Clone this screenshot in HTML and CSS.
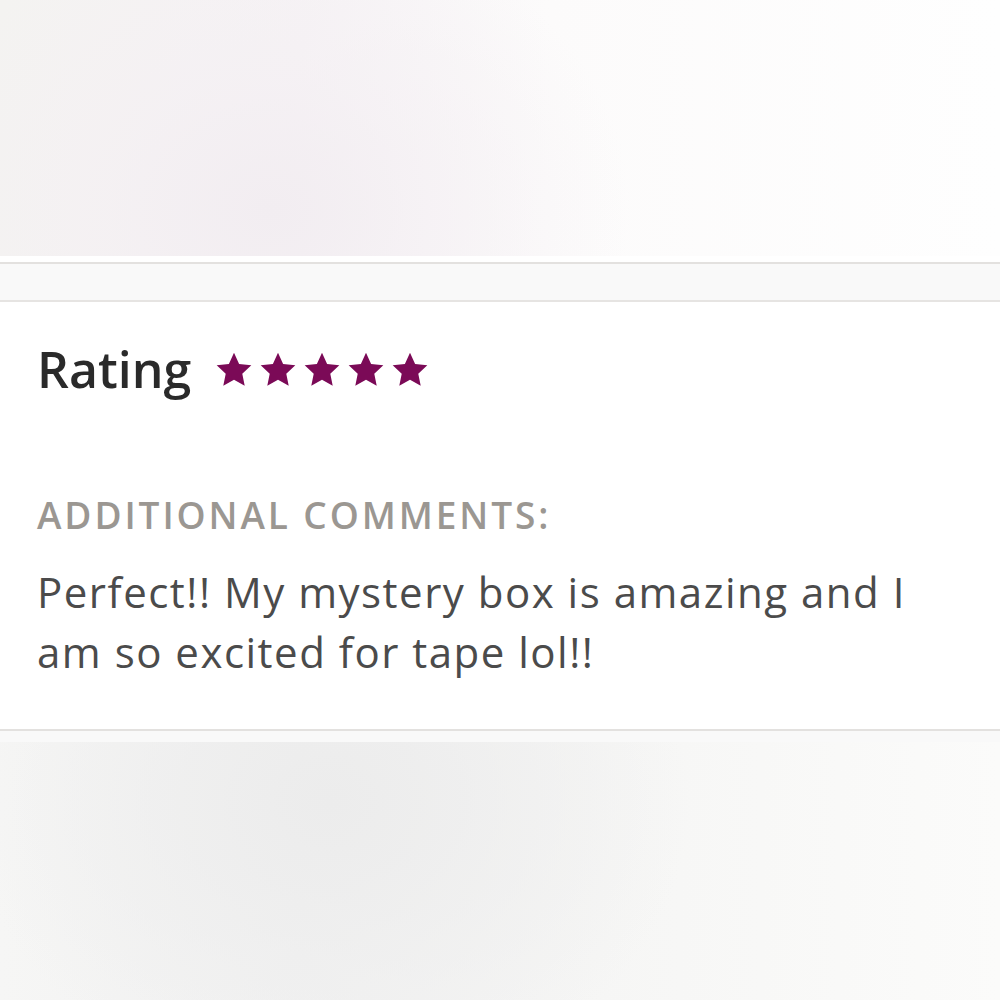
FILE: index.html
```html
<!DOCTYPE html>
<html lang="en">
<head>
  <meta charset="UTF-8">
  <meta name="viewport" content="width=device-width, initial-scale=1.0">
  <title>Review</title>
  <link rel="stylesheet" href="styles.css">
</head>
<body>
  <!-- blurred area above the review -->
  <div class="backdrop-top"></div>

  <div class="spacer-band"></div>

  <div class="review-card">
    <div class="rating-row">
      <h2>Rating</h2>
      <div class="stars">
        <svg viewBox="0 0 24 24"><path d="M12 1.1L15.23 8.15 22.94 9.05 17.23 14.3 18.76 21.9 12 18.1 5.24 21.9 6.77 14.3 1.06 9.05 8.77 8.15z"/></svg>
        <svg viewBox="0 0 24 24"><path d="M12 1.1L15.23 8.15 22.94 9.05 17.23 14.3 18.76 21.9 12 18.1 5.24 21.9 6.77 14.3 1.06 9.05 8.77 8.15z"/></svg>
        <svg viewBox="0 0 24 24"><path d="M12 1.1L15.23 8.15 22.94 9.05 17.23 14.3 18.76 21.9 12 18.1 5.24 21.9 6.77 14.3 1.06 9.05 8.77 8.15z"/></svg>
        <svg viewBox="0 0 24 24"><path d="M12 1.1L15.23 8.15 22.94 9.05 17.23 14.3 18.76 21.9 12 18.1 5.24 21.9 6.77 14.3 1.06 9.05 8.77 8.15z"/></svg>
        <svg viewBox="0 0 24 24"><path d="M12 1.1L15.23 8.15 22.94 9.05 17.23 14.3 18.76 21.9 12 18.1 5.24 21.9 6.77 14.3 1.06 9.05 8.77 8.15z"/></svg>
      </div>
    </div>

    <h3 class="comments-label">ADDITIONAL COMMENTS:</h3>
    <p class="comments-text">Perfect!! My mystery box is amazing and I am so excited for tape lol!!</p>
  </div>

  <div class="backdrop-bottom"></div>
</body>
</html>
```

FILE: styles.css
```css
body {
  font-family: "Open Sans", Lato, sans-serif;
  background-color: #ffffff;
  margin: 0;
  padding: 0;
  height: 1000px;
  overflow: hidden;
  display: flex;
  flex-direction: column;
}

.backdrop-top {
  height: 256px;
  margin-bottom: 6px;
  background:
    radial-gradient(ellipse 360px 300px at 270px 210px, #f2edf1 0%, rgba(244, 239, 243, 0.6) 45%, rgba(255, 255, 255, 0) 100%),
    linear-gradient(90deg, #f4f3f1 0%, #f6f3f5 30%, #fcfbfb 55%, #fefefe 100%);
}

.spacer-band {
  height: 36px;
  background-color: #f9f9f9;
  border-top: 2px solid #e3e1df;
  border-bottom: 2px solid #e6e4e2;
}

.review-card {
  box-sizing: border-box;
  background-color: #ffffff;
  padding: 37px 37px 0 37px;
  height: 429px;
  border-bottom: 2px solid #e3e1df;
}

.rating-row {
  display: flex;
  align-items: center;
  gap: 24px;
  height: 60px;
}

.rating-row h2 {
  margin: 0;
  font-size: 50px;
  font-weight: 600;
  color: #2a2a2a;
  line-height: 60px;
}

.stars {
  display: flex;
  gap: 6px;
  padding-top: 2px;
}

.stars svg {
  width: 38px;
  height: 38px;
  fill: #7b0a57;
}

.comments-label {
  margin: 94px 0 0 0;
  font-size: 37px;
  font-weight: 600;
  letter-spacing: 2.9px;
  color: #9b9792;
  line-height: 44px;
}

.comments-text {
  margin: 25px 0 0 0;
  max-width: 900px;
  font-size: 42px;
  letter-spacing: 1.5px;
  line-height: 60px;
  color: #4b4b4b;
}

.backdrop-bottom {
  flex: 1;
  border-top: 11px solid #f9f9f9;
  background:
    radial-gradient(ellipse 360px 300px at 330px 60px, #ececec 0%, rgba(238, 238, 238, 0.6) 55%, rgba(250, 250, 250, 0) 100%),
    linear-gradient(90deg, #f6f6f5 0%, #f1f1f1 30%, #f6f6f5 60%, #fbfbfa 100%);
}
```
